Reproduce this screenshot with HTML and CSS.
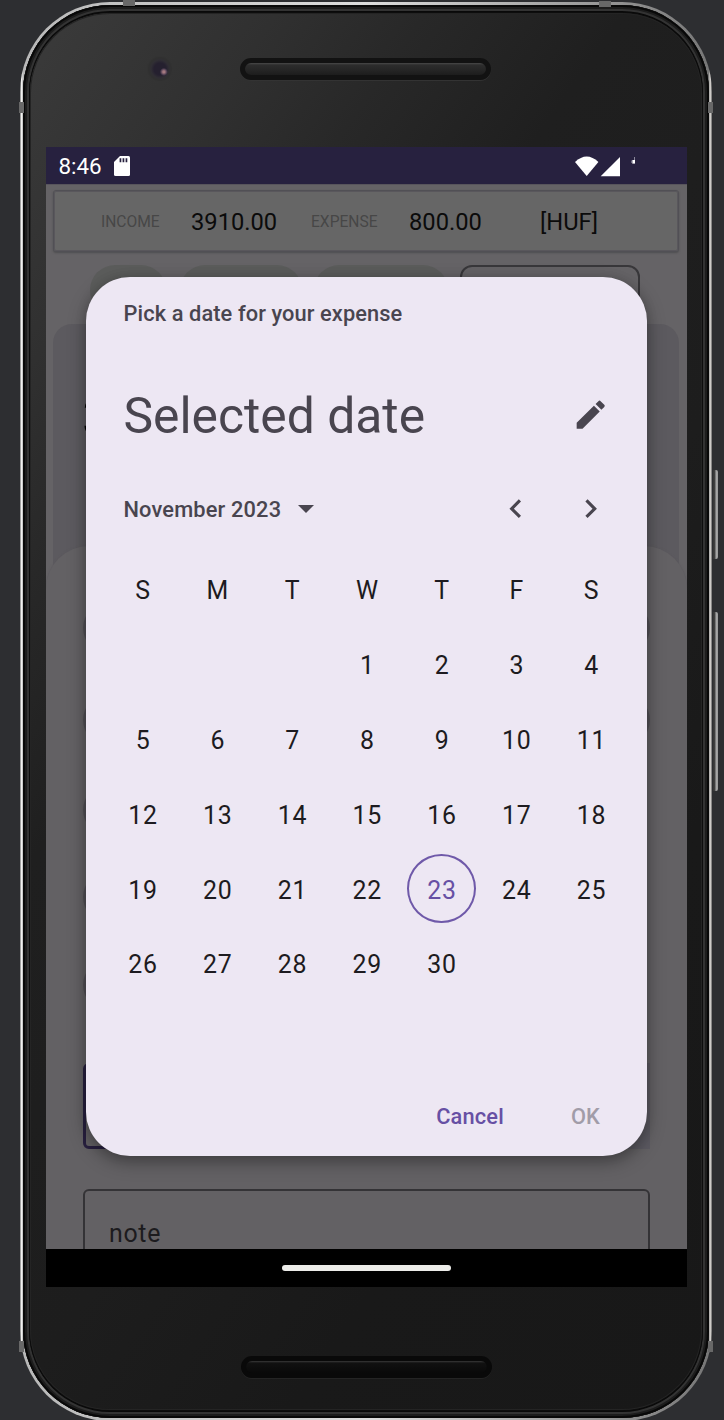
FILE: index.html
```html
<!DOCTYPE html>
<html lang="en">
<head>
<meta charset="utf-8">
<title>Pick a date</title>
<link rel="stylesheet" href="styles.css">
</head>
<body>
<div class="stage">
  <div class="key key-power"></div>
  <div class="key key-volume"></div>
  <div class="phone">
    <i class="seam seam-top-left"></i><i class="seam seam-top-right"></i>
    <i class="seam seam-left"></i><i class="seam seam-right"></i>
    <i class="seam seam-left low"></i><i class="seam seam-right low"></i>
    <div class="rim"><div class="face">
      <div class="forehead"><span class="camera"></span><span class="speaker"></span></div>
      <div class="screen">
        <header class="status">
          <span class="clock">8:46</span>
          <svg class="sd" width="16" height="20" viewBox="0 0 16 20"><path fill="#fff" d="M6 0h8.5Q16 0 16 1.500V18.500Q16 20 14.500 20H1.500Q0 20 0 18.500V6z"/><path fill="#27213f" d="M5.600 2.300h1.700v4H5.600zM8.600 2.300h1.700v4H8.600zM11.600 2.300h1.700v4h-1.700z"/></svg>
          <svg class="signals" width="62" height="21" viewBox="0 0 62 21"><path fill="#fff" d="M0 6.100Q11.700-5 23.400 6.100L11.700 20z"/><path fill="#fff" d="M45 1V20.300H25.700z"/><path fill="#fff" d="M57.300 4h2.700v3.600h-2.700z"/><path fill="#8a879a" d="M59 1h1v3h-1zM56.300 4.500h1v2.500h-1z"/></svg>
        </header>
        <main class="app">
          <section class="summary">
            <span class="label income">INCOME</span><span class="amount in-value">3910.00</span>
            <span class="label expense">EXPENSE</span><span class="amount ex-value">800.00</span>
            <span class="amount currency">[HUF]</span>
          </section>
          <div class="chips"><i class="chip c1"></i><i class="chip c2"></i><i class="chip c3"></i><i class="outline"></i></div>
          <section class="card"><span>3</span></section>
          <section class="sheet">
            <div class="pills"><i class="pill"></i><i class="pill"></i><i class="pill short"></i><i class="pill short"></i><i class="pill short"></i></div>
            <div class="entry"><i class="input"></i><i class="side"></i></div>
            <div class="note">note</div>
          </section>
          <section class="dialog">
            <p class="title">Pick a date for your expense</p>
            <div class="headline"><h1>Selected date</h1>
              <svg width="37.400" height="37.400" viewBox="0 0 24 24"><path fill="#49454f" d="M3 17.250V21h3.750L17.810 9.940l-3.750-3.750L3 17.250zM20.710 7.040a1 1 0 0 0 0-1.410l-2.340-2.340a1 1 0 0 0-1.410 0l-1.830 1.830 3.750 3.750 1.830-1.830z"/></svg></div>
            <div class="month"><span>November 2023</span>
              <svg class="caret" width="16" height="8" viewBox="0 0 16 8"><path fill="#49454f" d="M0 0h16L8 8z"/></svg>
              <svg class="prev" width="37.400" height="37.400" viewBox="0 0 24 24"><path fill="#49454f" d="M15.410 7.410 14 6l-6 6 6 6 1.410-1.410L10.830 12z"/></svg>
              <svg class="next" width="37.400" height="37.400" viewBox="0 0 24 24"><path fill="#49454f" d="M8.590 16.590 13.170 12 8.590 7.410 10 6l6 6-6 6z"/></svg></div>
            <div class="days">
              <b>S</b><b>M</b><b>T</b><b>W</b><b>T</b><b>F</b><b>S</b>
              <b></b><b></b><b></b><b>1</b><b>2</b><b>3</b><b>4</b>
              <b>5</b><b>6</b><b>7</b><b>8</b><b>9</b><b>10</b><b>11</b>
              <b>12</b><b>13</b><b>14</b><b>15</b><b>16</b><b>17</b><b>18</b>
              <b>19</b><b>20</b><b>21</b><b>22</b><b class="today">23</b><b>24</b><b>25</b>
              <b>26</b><b>27</b><b>28</b><b>29</b><b>30</b>
            </div>
            <div class="actions"><span class="cancel">Cancel</span><span class="ok">OK</span></div>
          </section>
        </main>
        <footer class="nav"><i></i></footer>
      </div>
      <div class="chin"><span class="speaker bottom"></span></div>
    </div></div>
  </div>
</div>
</body>
</html>
```
FILE: styles.css
```css
* { box-sizing: border-box; }
body { margin: 0; background: #2d2e31; font-family: Roboto, sans-serif; }
i, b { font-style: normal; font-weight: 400; }
svg { display: block; flex: none; }

/* device */
.stage { position: relative; width: 724px; height: 1420px; padding: 2px 0 0 20px; overflow: hidden; }
.phone {
  position: relative; width: 692px; height: 1419px; padding: 3px; border-radius: 90px;
  background: linear-gradient(90deg, #777, #f0f0ee 1.5px, #b8b8b8 3px, #ddd 50%, #777 689px, #f0ece8 690px, #666);
}
.rim {
  height: 1413px; padding: 8px 7px; border-radius: 87px; background: #090909;
  box-shadow: inset 0 0 0 2px #080808, inset 0 0 0 4px #1c1c1c, inset 0 0 0 6px #333;
}
.face {
  height: 1397px; padding: 0 15px 0 16px; border-radius: 80px; border: 0;
  background: linear-gradient(125deg, #3b3b3b 0, #303030 15%, #282828 24%, #1f1f1f 36%, #1d1d1d 58%, #191919 75%, #181818);
  box-shadow: 0 0 0 1px #0d0d0d, inset 0 0 0 1px #242424;
}
.key { position: absolute; left: 713px; width: 5px; border-radius: 0 2px 2px 0; background: linear-gradient(90deg, #333, #444 2px, #aaa 3px, #999); }
.key-power { top: 470px; height: 89px; }
.key-volume { top: 612px; height: 179px; }
.seam { position: absolute; width: 5px; height: 11px; background: #686868; }
.seam-left { left: -1px; top: 100px; }
.seam-right { right: -1px; top: 100px; }
.seam.low { top: 1339px; }
.seam-top-left, .seam-top-right { width: 12px; height: 6px; top: -2px; left: 103px; }
.seam-top-right { left: 579px; top: -1px; }
.forehead { height: 134px; display: flex; padding: 43px 0 0 101px; align-items: flex-start; }
.camera {
  width: 26px; height: 26px; border-radius: 50%; border: 1px solid #333;
  background: radial-gradient(circle at 66% 62%, #a57980 0 1px, #4b3c50 3px, transparent 4px), radial-gradient(circle, #25202f 0 6px, #302e34 9px, #303030 11px);
}
.speaker {
  width: 251px; height: 22px; margin: 2px 0 0 67px; border-radius: 11px; border: 5px solid #121212;
  background: linear-gradient(#494949 0, #2d2d2d 2px, #1d1d1d 100%); box-shadow: 0 1px 0 #333;
}
.chin { padding: 67px 0 0 128px; }
.bottom { display: block; height: 22px; margin-left: 67px; border-color: #090909; background: linear-gradient(#393939 0, #111 2px, #090909); box-shadow: 0 1px 0 #242424; }

/* screen */
.screen { width: 641px; height: 1140px; display: flex; flex-direction: column; background: #656366; }
.status { height: 37px; flex: none; display: flex; padding: 0 50px 0 12.500px; align-items: center; background: #27213f; color: #fff; }
.clock { width: 42px; font-size: 22.400px; line-height: 37px; padding-top: 2px; }
.sd { margin-left: 13px; }
.signals { margin-left: auto; margin-top: 1px; }
.app { position: relative; height: 1065px; flex: none; overflow: hidden; padding-top: 6px; box-shadow: inset 0 1px #58555c; }
.summary {
  display: flex; align-items: center; width: 626px; height: 62px; margin-left: 7px; padding-top: 2px;
  background: #666; border: 1px solid #515055; outline: 1px solid #59575c; outline-offset: -2px; border-radius: 3px; box-shadow: 0 1px 2px #4e4e50;
}
.summary span { flex: none; white-space: nowrap; }
.label { font-size: 15.600px; color: #474747; }
.amount { font-size: 23.700px; color: #0b0b0b; }
.income { width: 90px; margin-left: 47px; }
.in-value { width: 120px; }
.expense { width: 98px; }
.ex-value { width: 131px; }
.chips { display: flex; height: 58px; margin-top: 13px; padding-left: 44px; }
.chip { height: 50px; border-radius: 25px; background: #5b5c5b; }
.c1 { width: 76px; }
.c2 { width: 122px; margin-left: 14px; }
.c3 { width: 134px; margin-left: 12px; }
.outline { width: 180px; height: 50px; margin-left: 12px; border: 2px solid #38373a; border-radius: 12px; }
.card { width: 626px; height: 260px; margin: 1px 0 0 7px; padding: 62px 0 0 29px; border-radius: 19px; background: #5c5a5f; font-size: 54px; line-height: 64px; color: #000; }
.sheet { position: relative; height: 720px; margin-top: -38px; padding: 56px 37px 0; border-radius: 43px 43px 0 0; background: #636164; box-shadow: 0 0 2px #59575c; }
.pills { display: grid; grid-template-rows: 92px 90px 87px 88px 50px; height: 407px; }
.pill { width: 567px; height: 52px; border-radius: 26px; background: #525056; }
.short { width: 160px; }
.entry { height: 86px; margin-top: 54px; display: flex; }
.input { width: 360px; border: 3px solid #28203f; border-radius: 6px; }
.side { flex: 1; background: #5b5961; }
.note { height: 90px; margin-top: 40px; padding: 28px 24px; border: 2px solid #343336; border-radius: 6px; font-size: 24.900px; line-height: 30px; letter-spacing: .7px; color: #1c1b1e; }
.nav { height: 38px; flex: none; display: flex; justify-content: center; padding-top: 16px; background: #000; }
.nav i { width: 169px; height: 6px; border-radius: 3px; background: #ecece9; }

/* date picker, floating over the app */
.dialog {
  position: absolute; left: 40px; top: 93px; width: 561px; height: 879px; padding: 0 19px; border-radius: 44px;
  background: #ede7f3; color: #49454f; box-shadow: 0 6px 18px rgba(0, 0, 0, .34), 0 0 12px rgba(0, 0, 0, .1);
}
.title { margin: 0; padding: 21px 0 0 18.500px; font-size: 21.800px; line-height: 31px; font-weight: 500; letter-spacing: .1px; }
.headline { display: flex; align-items: center; justify-content: space-between; height: 70px; margin-top: 52px; padding: 0 19px 0 18.500px; }
h1 { margin: 0; font-size: 49.800px; line-height: 60px; font-weight: 400; }
.headline svg { margin-top: -2px; }
.month { display: flex; align-items: center; height: 75px; margin-top: 20px; padding: 0 19px 0 18.500px; }
.month span { font-size: 21.800px; font-weight: 500; letter-spacing: .16px; line-height: 30px; padding-top: 2px; }
.caret { margin-left: 17px; }
.prev { margin-left: auto; }
.next { margin-left: 37.400px; }
.days { display: grid; grid-template-columns: repeat(7, 74.750px); grid-auto-rows: 74.800px; margin-top: 7px; }
.days b { display: flex; align-items: center; justify-content: center; padding: .9px 0 0 1.500px; font-size: 24.900px; letter-spacing: .78px; color: #1d1b20; }
.days .today { position: relative; color: #6750a4; }
.today::after { content: ""; position: absolute; inset: 2px 3px 4px; border: 2px solid #6f59a9; border-radius: 50%; }
.actions { display: flex; justify-content: flex-end; margin-top: 90.500px; padding-right: 28px; font-size: 21.800px; line-height: 50px; font-weight: 500; letter-spacing: .16px; }
.cancel { color: #6750a4; margin-right: 67px; }
.ok { color: #a19ca8; }
```
